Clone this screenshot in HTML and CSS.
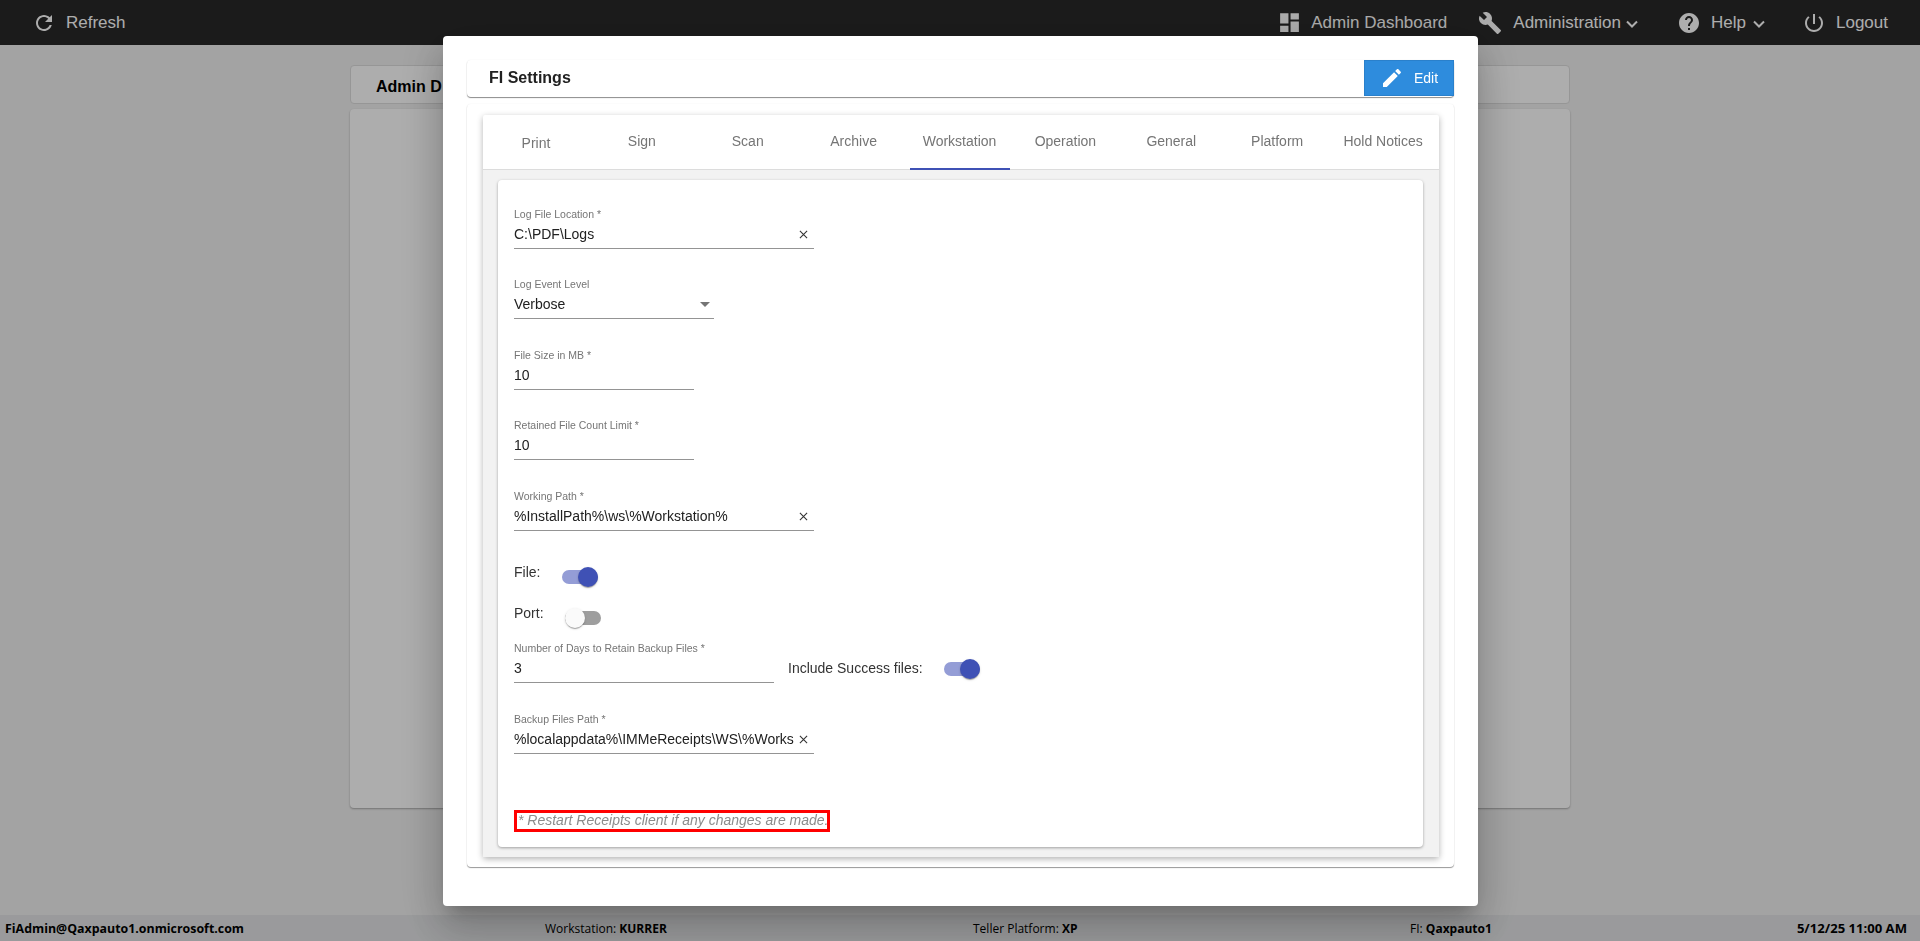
FILE: index.html
```html
<!DOCTYPE html>
<html lang="en">
<head>
    <meta charset="UTF-8">
    <title>FI Settings</title>
    <link rel="stylesheet" href="styles.css">
</head>
<body>
    <nav class="topbar">
        <a class="nav-item refresh">
            <svg class="nav-icon" viewBox="0 0 24 24"><path d="M17.65 6.35C16.2 4.9 14.21 4 12 4c-4.42 0-7.99 3.58-7.99 8s3.57 8 7.99 8c3.73 0 6.84-2.55 7.73-6h-2.08c-.82 2.33-3.04 4-5.65 4-3.31 0-6-2.69-6-6s2.69-6 6-6c1.66 0 3.14.69 4.22 1.78L13 11h7V4l-2.35 2.35z"/></svg>
            Refresh
        </a>
        <a class="nav-item dash">
            <svg class="nav-icon" viewBox="0 0 24 24"><path d="M3 13h8V3H3v10zm0 8h8v-6H3v6zm10 0h8V11h-8v10zm0-18v6h8V3h-8z"/></svg>
            Admin Dashboard
        </a>
        <a class="nav-item admin">
            <svg class="nav-icon wrench" viewBox="0 0 24 24"><path d="M22.7 19l-9.1-9.1c.9-2.3.4-5-1.5-6.9-2-2-5-2.4-7.4-1.3L9 6 6 9 1.6 4.7C.4 7.1.9 10.1 2.9 12.1c1.9 1.9 4.6 2.4 6.9 1.5l9.1 9.1c.4.4 1 .4 1.4 0l2.3-2.3c.5-.4.5-1.1.1-1.4z"/></svg>
            Administration
            <svg class="chevron" viewBox="0 0 12 8"><path d="M1 1.5l5 5 5-5"/></svg>
        </a>
        <a class="nav-item help">
            <svg class="nav-icon" viewBox="0 0 24 24"><path d="M12 2C6.48 2 2 6.48 2 12s4.48 10 10 10 10-4.48 10-10S17.52 2 12 2zm1 17h-2v-2h2v2zm2.07-7.75l-.9.92C13.45 12.9 13 13.5 13 15h-2v-.5c0-1.1.45-2.1 1.17-2.83l1.24-1.26c.37-.36.59-.86.59-1.41 0-1.1-.9-2-2-2s-2 .9-2 2H8c0-2.21 1.79-4 4-4s4 1.79 4 4c0 .88-.36 1.68-.93 2.25z"/></svg>
            Help
            <svg class="chevron" viewBox="0 0 12 8"><path d="M1 1.5l5 5 5-5"/></svg>
        </a>
        <a class="nav-item logout">
            <svg class="nav-icon" viewBox="0 0 24 24"><path d="M13 3h-2v10h2V3zm4.83 2.17l-1.42 1.42C17.99 7.86 19 9.81 19 12c0 3.87-3.13 7-7 7s-7-3.13-7-7c0-2.19 1.01-4.14 2.58-5.42L6.17 5.17C4.23 6.82 3 9.26 3 12c0 4.97 4.03 9 9 9s9-4.03 9-9c0-2.74-1.23-5.18-3.17-6.83z"/></svg>
            Logout
        </a>
    </nav>

    <main class="page">
        <div class="page-head">Admin D</div>
        <div class="page-body"></div>
    </main>

    <footer class="statusbar">
        <b class="status-user">FiAdmin@Qaxpauto1.onmicrosoft.com</b>
        <span>Workstation: <b>KURRER</b></span>
        <span>Teller Platform: <b>XP</b></span>
        <span>FI: <b>Qaxpauto1</b></span>
        <b class="status-date">5/12/25 11:00 AM</b>
    </footer>

    <div class="backdrop"></div>

    <div class="dialog">
        <div class="title-card">
            <h2>FI Settings</h2>
            <button class="edit-btn">
                <svg viewBox="0 0 24 24"><path d="M3 17.25V21h3.75L17.81 9.94l-3.75-3.75L3 17.25zM20.71 7.04c.39-.39.39-1.02 0-1.41l-2.34-2.34c-.39-.39-1.02-.39-1.41 0l-1.83 1.83 3.75 3.75 1.83-1.83z"/></svg>
                Edit
            </button>
        </div>

        <div class="content-card">
            <div class="tabs-card">
                <div class="tabs">
                    <div class="tab tab-print">Print</div>
                    <div class="tab">Sign</div>
                    <div class="tab">Scan</div>
                    <div class="tab">Archive</div>
                    <div class="tab active">Workstation</div>
                    <div class="tab">Operation</div>
                    <div class="tab">General</div>
                    <div class="tab">Platform</div>
                    <div class="tab">Hold Notices</div>
                </div>

                <div class="tab-pane">
                    <div class="form-card">
                        <div class="field w300">
                            <label>Log File Location *</label>
                            <div class="control">
                                <span class="value">C:\PDF\Logs</span>
                                <svg class="clear" viewBox="0 0 10 10"><path d="M1 1l8 8M9 1l-8 8"/></svg>
                            </div>
                        </div>

                        <div class="field w200">
                            <label>Log Event Level</label>
                            <div class="control">
                                <span class="value">Verbose</span>
                                <span class="arrow"></span>
                            </div>
                        </div>

                        <div class="field w180">
                            <label>File Size in MB *</label>
                            <div class="control"><span class="value">10</span></div>
                        </div>

                        <div class="field w180">
                            <label>Retained File Count Limit *</label>
                            <div class="control"><span class="value">10</span></div>
                        </div>

                        <div class="field w300">
                            <label>Working Path *</label>
                            <div class="control">
                                <span class="value">%InstallPath%\ws\%Workstation%</span>
                                <svg class="clear" viewBox="0 0 10 10"><path d="M1 1l8 8M9 1l-8 8"/></svg>
                            </div>
                        </div>

                        <div class="toggle-row row-file">
                            <span class="toggle-label">File:</span>
                            <span class="toggle on"><i></i></span>
                        </div>

                        <div class="toggle-row row-port">
                            <span class="toggle-label">Port:</span>
                            <span class="toggle"><i></i></span>
                        </div>

                        <div class="days-row">
                            <div class="field w260">
                                <label>Number of Days to Retain Backup Files *</label>
                                <div class="control"><span class="value">3</span></div>
                            </div>
                            <div class="toggle-row row-success">
                                <span class="toggle-label">Include Success files:</span>
                                <span class="toggle on"><i></i></span>
                            </div>
                        </div>

                        <div class="field w300">
                            <label>Backup Files Path *</label>
                            <div class="control">
                                <span class="value">%localappdata%\IMMeReceipts\WS\%Works</span>
                                <svg class="clear" viewBox="0 0 10 10"><path d="M1 1l8 8M9 1l-8 8"/></svg>
                            </div>
                        </div>

                        <div class="restart-note">* Restart Receipts client if any changes are made.</div>
                    </div>
                </div>
            </div>
        </div>
    </div>
</body>
</html>
```

FILE: styles.css
```css
* {
    box-sizing: border-box;
}
html, body {
    height: 100%;
}
body {
    margin: 0;
    background-color: #f0f0f0;
    font-family: "Liberation Sans", Arial, sans-serif;
    font-size: 14px;
    color: #212121;
    overflow: hidden;
    display: flex;
    flex-direction: column;
}

/* top bar */
.topbar {
    height: 45px;
    background-color: #292929;
    color: #fff;
    font-size: 17px;
    display: flex;
    align-items: center;
    flex: none;
}
.nav-item {
    display: flex;
    align-items: center;
}
.nav-icon {
    width: 24px;
    height: 24px;
    fill: #fff;
    flex: none;
}
.chevron {
    width: 12px;
    height: 8px;
    margin-left: 6px;
    margin-top: 2px;
    fill: none;
    stroke: #fff;
    stroke-width: 2;
}
.refresh {
    margin-left: 32px;
    margin-right: auto;
}
.refresh .nav-icon {
    margin-right: 10px;
}
.dash .nav-icon {
    width: 25px;
    height: 25px;
    margin-right: 9px;
}
.dash {
    margin-right: 31px;
}
.admin .wrench {
    margin-right: 11px;
}
.admin .chevron {
    margin-left: 5px;
}
.admin {
    margin-right: 39px;
}
.help .nav-icon {
    margin-right: 10px;
}
.help .chevron {
    margin-left: 7px;
}
.help {
    margin-right: 37px;
}
.logout .nav-icon {
    margin-right: 10px;
}
.logout {
    margin-right: 32px;
}

/* page under the dialog */
.page {
    flex: 1;
    width: 1220px;
    margin: 20px auto 0 350px;
}
.page-head {
    height: 39px;
    padding: 0 25px;
    line-height: 41px;
    font-size: 16px;
    font-weight: bold;
    color: #000;
    background-color: #fff;
    border: 1px solid #ddd;
    border-radius: 4px;
    margin-bottom: 5px;
}
.page-body {
    height: 699px;
    background-color: #fff;
    border-radius: 4px;
    box-shadow: 0 1px 2px rgba(0, 0, 0, .3);
}

.statusbar {
    height: 26px;
    flex: none;
    background-color: #e3e4e6;
    color: #000;
    font-family: "Open Sans", sans-serif;
    font-size: 12px;
    display: grid;
    grid-template-columns: 540px 428px 437px 1fr auto;
    align-items: center;
    padding: 0 13px 0 5px;
}
.status-user {
    font-size: 12.4px;
}
.status-date {
    font-size: 13.1px;
}

.backdrop {
    position: fixed;
    top: 0;
    left: 0;
    right: 0;
    bottom: 0;
    background-color: rgba(0, 0, 0, .32);
}

/* dialog */
.dialog {
    position: fixed;
    top: 36px;
    left: 443px;
    width: 1035px;
    height: 870px;
    padding: 24px;
    background-color: #fff;
    border-radius: 4px;
    box-shadow: 0 11px 15px -7px rgba(0, 0, 0, .2), 0 24px 38px 3px rgba(0, 0, 0, .14), 0 9px 46px 8px rgba(0, 0, 0, .12);
}
.title-card {
    height: 37px;
    display: flex;
    justify-content: space-between;
    border-radius: 4px;
    box-shadow: 0 1px 1px rgba(0, 0, 0, .45), 0 0 2px rgba(0, 0, 0, .06);
}
.title-card h2 {
    margin: 0;
    padding-left: 22px;
    line-height: 36px;
    font-size: 16px;
    font-weight: 700;
    color: #212121;
}
.edit-btn {
    width: 90px;
    height: 36px;
    padding: 0 0 0 15px;
    display: flex;
    align-items: center;
    background-color: #2e8cdd;
    border: 1px solid #2a80cb;
    color: #fff;
    font-family: "Liberation Sans", Arial, sans-serif;
    font-size: 14px;
}
.edit-btn svg {
    width: 24px;
    height: 24px;
    fill: #fff;
    margin-right: 10px;
}
.content-card {
    margin-top: 7px;
    height: 763px;
    padding: 11px 15px 0 16px;
    border-radius: 4px;
    box-shadow: 0 1px 1px rgba(0, 0, 0, .4), 0 0 2px rgba(0, 0, 0, .06);
}
.tabs-card {
    height: 742px;
    border-radius: 2px;
    box-shadow: 0 2px 6px rgba(0, 0, 0, .3);
}
.tabs {
    height: 55px;
    padding-right: 3px;
    display: flex;
    border-bottom: 1px solid #dcdcdc;
}
.tab {
    flex: 1;
    position: relative;
    text-align: center;
    line-height: 52px;
    color: #757575;
    font-size: 14px;
}
.tab-print {
    padding-top: 2px;
}
.tab.active::after {
    content: "";
    position: absolute;
    left: 3px;
    right: 2px;
    bottom: -1px;
    height: 2px;
    background-color: #3f51b5;
}
.tab-pane {
    height: 687px;
    padding: 10px 16px 10px 15px;
    background-color: #f2f2f2;
}
.form-card {
    height: 667px;
    padding: 28px 16px 0;
    background-color: #fff;
    border-radius: 4px;
    box-shadow: 0 1px 3px rgba(0, 0, 0, .35);
}

/* form fields */
.field {
    height: 70.4px;
}
.w300 {
    width: 300px;
}
.w260 {
    width: 260px;
}
.w200 {
    width: 200px;
}
.w180 {
    width: 180px;
}
.field label {
    display: block;
    height: 13px;
    line-height: 13px;
    font-size: 10.5px;
    color: #757575;
}
.control {
    height: 28px;
    padding-top: 3px;
    display: flex;
    align-items: flex-start;
    border-bottom: 1px solid #949494;
}
.value {
    flex: 1;
    min-width: 0;
    line-height: 20px;
    font-size: 14px;
    color: #212121;
    white-space: nowrap;
    overflow: hidden;
}
.clear {
    width: 9px;
    height: 9px;
    margin: 6px 6px 0 5px;
    flex: none;
    fill: none;
    stroke: #333;
    stroke-width: 1.2;
}
.arrow {
    width: 0;
    height: 0;
    margin: 8px 4px 0 0;
    border-left: 5px solid transparent;
    border-right: 5px solid transparent;
    border-top: 5px solid #757575;
}

.toggle-row {
    display: flex;
    align-items: flex-start;
    height: 24px;
    font-size: 14px;
    color: #333;
}
.toggle-label {
    margin-right: 22px;
    line-height: 16px;
}
.row-file {
    margin-top: 4px;
}
.row-port {
    margin-top: 17px;
}
.row-port .toggle-label {
    margin-right: 21px;
}
.toggle {
    position: relative;
    display: block;
    width: 36px;
    height: 14px;
    margin-top: 6px;
    border-radius: 7px;
    background-color: #9e9e9e;
}
.toggle i {
    position: absolute;
    top: -3px;
    left: 0;
    width: 20px;
    height: 20px;
    border-radius: 50%;
    background-color: #fafafa;
    box-shadow: 0 2px 1px -1px rgba(0, 0, 0, .2), 0 1px 1px rgba(0, 0, 0, .14), 0 1px 3px rgba(0, 0, 0, .12);
}
.toggle.on {
    background-color: #949dd6;
}
.toggle.on i {
    left: 16px;
    background-color: #3f51b5;
}
.days-row {
    margin-top: 13px;
    display: flex;
    height: 71px;
}
.row-success {
    margin: 16.5px 0 0 14px;
}
.row-success .toggle-label {
    margin-top: 2px;
    margin-right: 21px;
}
.row-success .toggle {
    margin-top: 4px;
}
.restart-note {
    width: 316px;
    height: 22px;
    margin-top: 26.6px;
    padding-left: 1px;
    border: 3px solid #f00;
    line-height: 15px;
    font-style: italic;
    font-size: 14px;
    color: #8c8c8c;
    white-space: nowrap;
}
```
